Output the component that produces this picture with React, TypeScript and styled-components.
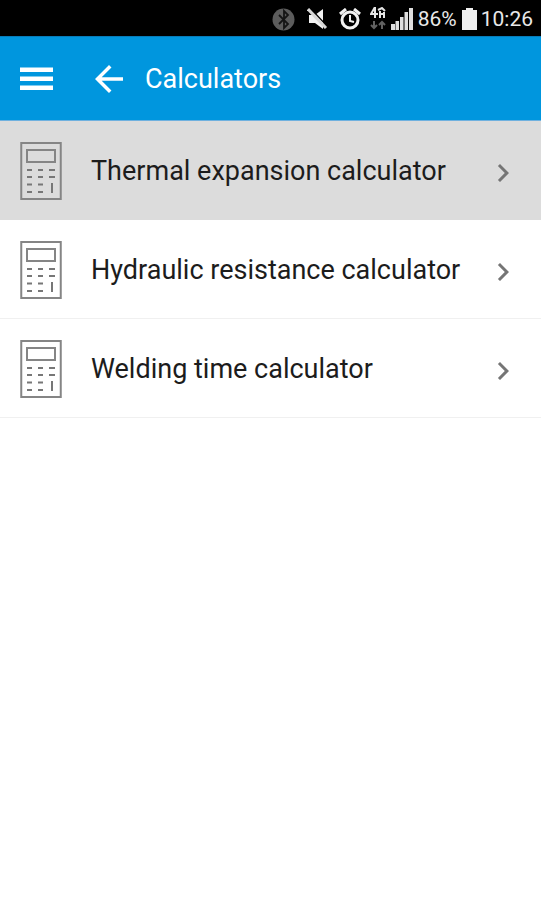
import React from "react";
import styled, { createGlobalStyle } from "styled-components";

const GlobalStyle = createGlobalStyle`
  * { box-sizing: border-box; }
  body { margin: 0; background: #fff; font-family: Roboto, "Liberation Sans", sans-serif; }
`;

const StatusBar = styled.div`
  display: flex;
  align-items: center;
  justify-content: flex-end;
  height: 36px;
  padding: 2px 8px 0 0;
  background: #000;
  color: #e8e8e8;
  font-size: 21px;
  line-height: 24px;

  svg { display: block; flex: none; }
`;

const StatusIcon = styled.span<{ $gap: number }>`
  margin-right: ${(p) => p.$gap}px;
`;

const AppBar = styled.header`
  display: flex;
  align-items: center;
  height: 85px;
  padding-left: 16px;
  background: #0096de;
  border-top: 1px solid #087bb8;
  border-bottom: 1px solid #6fb1df;
  color: #fff;
`;

const IconButton = styled.button<{ $gap: number }>`
  display: block;
  flex: none;
  margin: 0 ${(p) => p.$gap}px 0 0;
  padding: 0;
  border: 0;
  background: none;
  color: inherit;
  cursor: pointer;

  svg { display: block; }
`;

const Title = styled.h1`
  margin: 0;
  font-size: 27px;
  line-height: 36px;
  font-weight: 400;
`;

const List = styled.ul`
  margin: 0;
  padding: 0;
  list-style: none;
`;

const Row = styled.a<{ $active?: boolean }>`
  display: flex;
  align-items: center;
  padding: 21px 20px 19px;
  border-bottom: 1px solid ${(p) => (p.$active ? "#dcdcdc" : "#f0f0f0")};
  background: ${(p) => (p.$active ? "#dcdcdc" : "#fff")};
  color: #1c1c1c;
  text-decoration: none;

  svg { display: block; flex: none; }
`;

const Label = styled.span`
  flex: 1;
  margin-left: 29px;
  font-size: 27px;
  line-height: 36px;
  white-space: nowrap;
`;

const ChevronBox = styled.span`
  padding-top: 3px;
`;

const CalculatorIcon = () => (
  <svg width="42" height="58" viewBox="0 0 42 58" fill="none" stroke="#858585" aria-hidden="true">
    <rect x="1.25" y="1" width="39.5" height="56" strokeWidth="2" />
    <rect x="7" y="8" width="28" height="12" strokeWidth="2" />
    <path
      d="M7 28h5M18 28h5M29 28h6M7 35h5M18 35h5M29 35h6M7 42.500h5M18 42.500h5M7 50h5M18 50h5"
      stroke="#777"
      strokeWidth="2"
    />
    <path d="M32 41v10" stroke="#777" strokeWidth="2" />
  </svg>
);

const Chevron = () => (
  <svg width="36" height="36" viewBox="0 0 24 24" fill="#757575" aria-hidden="true">
    <path d="M10 6 8.6 7.4l4.6 4.6-4.6 4.6L10 18l6-6z" />
  </svg>
);

const calculators = [
  { id: "thermal", name: "Thermal expansion calculator", active: true },
  { id: "hydraulic", name: "Hydraulic resistance calculator", active: false },
  { id: "welding", name: "Welding time calculator", active: false },
];

export default function App() {
  return (
    <>
      <GlobalStyle />
      <StatusBar>
        <StatusIcon $gap={12}>
          <svg width="23" height="23" viewBox="0 0 23 23" aria-hidden="true">
            <circle cx="11.5" cy="11.5" r="11" fill="#5c5c5c" />
            <path d="m7 7 9 9-4 4V3l4 4-9 9" fill="none" stroke="#151515" strokeWidth="1.8" />
          </svg>
        </StatusIcon>
        <StatusIcon $gap={11}>
          <svg width="21" height="22" viewBox="0 0 21 22" aria-hidden="true">
            <path d="M2 7h6l8-6v20l-8-6H2z" fill="#f2f2f2" />
            <path d="M3 0l18 19" stroke="#000" strokeWidth="1.5" />
            <path d="M1 1l18 19" stroke="#d8d8d8" strokeWidth="3" />
          </svg>
        </StatusIcon>
        <StatusIcon $gap={9}>
          <svg width="22" height="22" viewBox="0 0 22 22" fill="none" stroke="#f2f2f2" aria-hidden="true">
            <circle cx="11" cy="12" r="8" strokeWidth="3" />
            <path d="M11 7v6l4 1" strokeWidth="2" />
            <path d="M1 6 7 1M15 1l6 5" strokeWidth="3" />
          </svg>
        </StatusIcon>
        <StatusIcon $gap={5}>
          <svg width="16" height="24" viewBox="0 0 16 24" fill="none" aria-hidden="true">
            <path d="M5 0 1 7h7M5 0v11M8 3l4-2 3 3M10 4v7M9 7h5M14 5v6" stroke="#e4e4e4" strokeWidth="2" />
            <path d="M4 14v7M1 18l3 3 3-3M12 22v-7M9 18l3-3 3 3" stroke="#626262" strokeWidth="2" />
          </svg>
        </StatusIcon>
        <StatusIcon $gap={5}>
          <svg width="22" height="22" viewBox="0 0 22 22" fill="#dedede" aria-hidden="true">
            <path d="M0 16h4v6H0zM4.500 13h3.500v9h-3.500zM9 9h3.500v13H9zM13.500 4h3.500v18h-3.500zM18 0h4v22h-4z" />
          </svg>
        </StatusIcon>
        <StatusIcon $gap={5}>86%</StatusIcon>
        <StatusIcon $gap={4}>
          <svg width="15" height="22" viewBox="0 0 15 22" aria-hidden="true">
            <path d="M4 0h7v2h4v20H0V2h4z" fill="#f0f0f0" />
          </svg>
        </StatusIcon>
        <span>10:26</span>
      </StatusBar>
      <AppBar>
        <IconButton $gap={30} aria-label="Open menu">
          <svg width="42" height="42" viewBox="0 0 42 42" fill="currentColor" aria-hidden="true">
            <path d="M4 9.500h33v4.500H4zM4 18.500h33v4.500H4zM4 27.500h33v4.500H4z" />
          </svg>
        </IconButton>
        <IconButton $gap={15} aria-label="Back">
          <svg width="42" height="42" viewBox="0 0 24 24" fill="currentColor" aria-hidden="true">
            <path d="M20 11H7.830l5.590-5.590L12 4l-8 8 8 8 1.410-1.410L7.830 13H20z" />
          </svg>
        </IconButton>
        <Title>Calculators</Title>
      </AppBar>
      <List>
        {calculators.map((item) => (
          <li key={item.id}>
            <Row href={`#${item.id}`} $active={item.active}>
              <CalculatorIcon />
              <Label>{item.name}</Label>
              <ChevronBox>
                <Chevron />
              </ChevronBox>
            </Row>
          </li>
        ))}
      </List>
    </>
  );
}
